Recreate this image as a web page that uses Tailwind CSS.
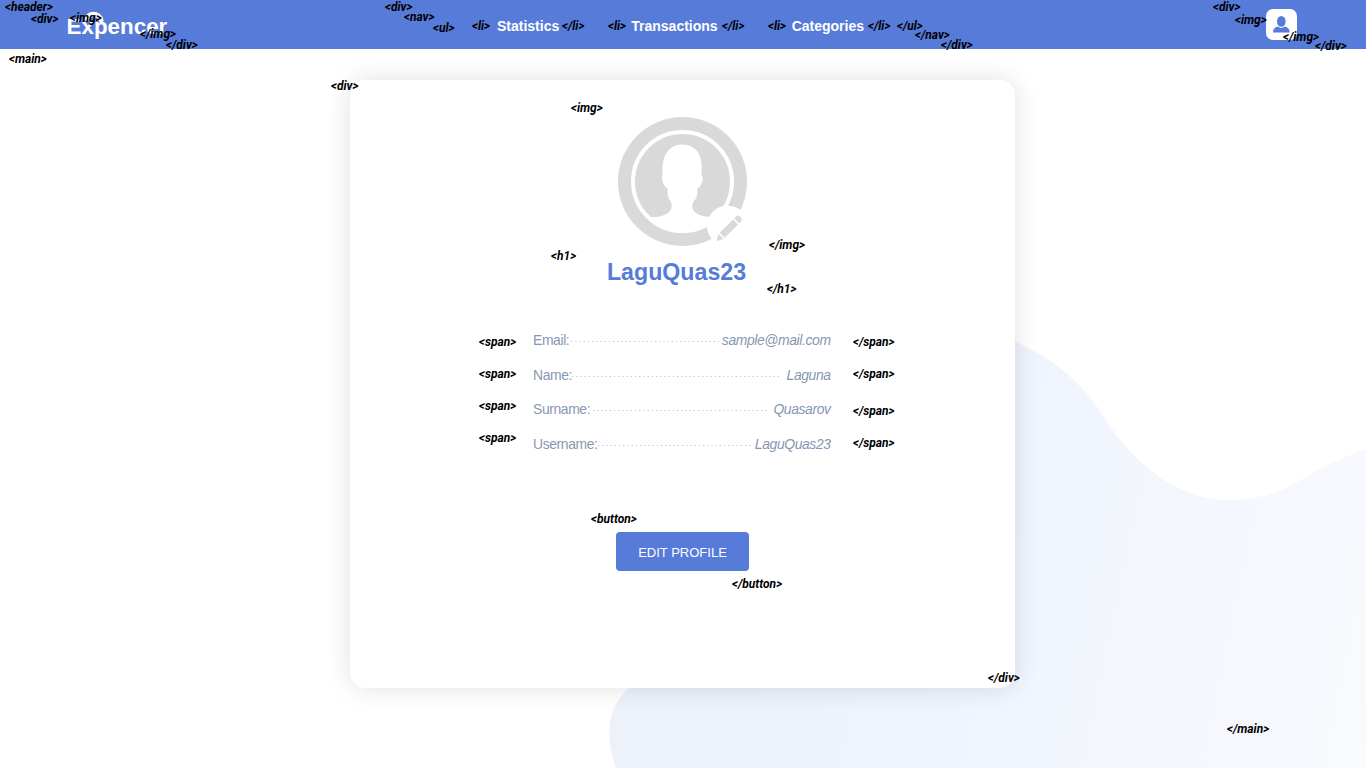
<!DOCTYPE html>
<html lang="en">
<head>
<meta charset="utf-8">
<title>Expencer</title>
<script src="https://cdn.jsdelivr.net/npm/@tailwindcss/browser@4"></script>
</head>
<body class="relative w-[1366px] h-[768px] overflow-hidden bg-white flex flex-col font-['Liberation_Sans',sans-serif]">
<svg class="absolute inset-0" width="1366" height="768" viewBox="0 0 1366 768">
  <defs><linearGradient id="wave" gradientUnits="userSpaceOnUse" x1="720" y1="540" x2="1380" y2="680"><stop offset="0" stop-color="#ecf1fa"/><stop offset=".5" stop-color="#f1f5fd"/><stop offset="1" stop-color="#f9fafe"/></linearGradient></defs>
  <path fill="url(#wave)" d="M616 768C605 738 606 708 629 688L700 600L900 320C950 320 985 327 1015 341.500C1051 357 1081 382 1100 411C1129 459 1173 500 1231 500C1254 500 1277 494 1299 481C1320 468 1342 457 1366 449V768Z"/>
</svg>
<header class="relative h-[49px] shrink-0 bg-[#567bd9] flex items-center">
  <div class="relative ml-[66.500px] w-[419px] text-white font-bold text-[22.400px] leading-[26px] pt-[4px]">
    <svg class="absolute left-[16.500px] top-0" width="22" height="14" viewBox="0 0 22 14"><path fill="#fff" d="M.5 10A10.200 10.200 0 0 1 20.500 10L20 13H17Q15 7 11 7Q7 7 5 11Z"/></svg>
    <span class="relative">Expencer</span>
  </div>
  <nav class="flex-1 ml-[11.500px]"><ul class="flex items-center gap-[72px] text-white font-bold text-[14px] leading-4 pt-[2px]">
    <li>Statistics</li><li>Transactions</li><li class="ml-[2px]">Categories</li></ul></nav>
  <div class="w-[31px] h-[31px] rounded-[7px] bg-white mr-[69px]">
    <svg width="31" height="31" viewBox="0 0 31 31" fill="#567bd9"><ellipse cx="15.300" cy="12.400" rx="4.300" ry="5.400"/><path d="M7 23.500Q7 18.500 12 17.500Q15.300 20.300 18.600 17.500Q23.700 18.500 23.700 23.500Z"/></svg>
  </div>
</header>
<main class="relative flex justify-center pt-[31px] pr-px">
  <div class="w-[665px] h-[608px] rounded-[15px] bg-white shadow-[0_0_27px_rgba(0,0,0,0.12)] flex flex-col items-center pt-[37px]">
    <svg width="130" height="130" viewBox="0.500 0 130 130">
      <circle cx="65" cy="64.500" r="64.500" fill="#d9d9d9"/>
      <circle cx="65" cy="64.500" r="49.500" fill="#d9d9d9" stroke="#fff" stroke-width="4"/>
      <path fill="#fff" d="M33 100C44 101 53 96 54 91C55 87 53 84 51 81Q50 77 50 71C46 71 43 59 45 58C44 40 50 27.500 65 27.500C80 27.500 86 40 84 58C87 59 84 71 80 71Q80 77 79 81C76 84 74 87 75 91C76 97 85 100 95 100Q82 116 65 116Q46 116 33 100Z"/>
      <circle cx="110" cy="109" r="20.500" fill="#fff"/>
      <g transform="translate(99 124) rotate(-45)" fill="#d9d9d9"><path d="M0 0L6.500-3.500V3.500Z"/><rect x="8" y="-3.500" width="19" height="7"/><path d="M28.500-3.500h2a3.500 3.500 0 0 1 0 7h-2z"/></g>
    </svg>
    <h1 class="mt-[11px] mr-[12px] text-[#567bd9] font-bold text-[23.200px] leading-7">LaguQuas23</h1>
    <div class="mt-[46px] mr-px w-[298px] text-[13.900px] tracking-[-0.38px] leading-[16px] text-[#8797b2] flex flex-col gap-[18.600px]">
      <div class="flex"><span>Email:</span><svg class="flex-1 h-4 ml-[2px]"><line x1="0" x2="100%" y1="9.500" y2="9.500" stroke="#c0c6d8" stroke-dasharray="1.200 3"/></svg><em class="mr-[.4px]">sample@mail.com</em></div>
      <div class="flex"><span>Name:</span><svg class="flex-1 h-4 mr-[5px]"><line x1="0" x2="100%" y1="9.500" y2="9.500" stroke="#c0c6d8" stroke-dasharray="1.200 3"/></svg><em class="mr-[.4px]">Laguna</em></div>
      <div class="flex"><span>Surname:</span><svg class="flex-1 h-4 ml-[3px] mr-[6px]"><line x1="0" x2="100%" y1="9.500" y2="9.500" stroke="#c0c6d8" stroke-dasharray="1.200 3"/></svg><em class="mr-[.4px]">Quasarov</em></div>
      <div class="flex"><span>Username:</span><svg class="flex-1 h-4 mr-[4px]"><line x1="0" x2="100%" y1="9.500" y2="9.500" stroke="#c0c6d8" stroke-dasharray="1.200 3"/></svg><em class="mr-[.4px]">LaguQuas23</em></div>
    </div>
    <button class="mt-[80.200px] w-[133px] h-[39px] rounded-[4px] bg-[#567bd9] text-white text-[13px] pt-[2px]">EDIT PROFILE</button>
  </div>
</main>
<div class="absolute inset-0 text-black font-['Roboto',sans-serif] font-bold italic text-[12px] leading-[14px] whitespace-nowrap">
  <span class="absolute left-[5px] top-0">&lt;header&gt;</span>
  <span class="absolute left-[31px] top-[12px]">&lt;div&gt;</span>
  <span class="absolute left-[70px] top-[11px]">&lt;img&gt;</span>
  <span class="absolute left-[140px] top-[27px]">&lt;/img&gt;</span>
  <span class="absolute left-[166px] top-[38px]">&lt;/div&gt;</span>
  <span class="absolute left-[9px] top-[52px]">&lt;main&gt;</span>
  <span class="absolute left-[385px] top-0">&lt;div&gt;</span>
  <span class="absolute left-[404px] top-[10px]">&lt;nav&gt;</span>
  <span class="absolute left-[433px] top-[21px]">&lt;ul&gt;</span>
  <span class="absolute left-[472px] top-[19px]">&lt;li&gt;</span>
  <span class="absolute left-[562px] top-[19px]">&lt;/li&gt;</span>
  <span class="absolute left-[608px] top-[19px]">&lt;li&gt;</span>
  <span class="absolute left-[722px] top-[19px]">&lt;/li&gt;</span>
  <span class="absolute left-[768px] top-[19px]">&lt;li&gt;</span>
  <span class="absolute left-[868px] top-[19px]">&lt;/li&gt;</span>
  <span class="absolute left-[897px] top-[19px]">&lt;/ul&gt;</span>
  <span class="absolute left-[915px] top-[28px]">&lt;/nav&gt;</span>
  <span class="absolute left-[941px] top-[38px]">&lt;/div&gt;</span>
  <span class="absolute left-[1213px] top-0">&lt;div&gt;</span>
  <span class="absolute left-[1235px] top-[13px]">&lt;img&gt;</span>
  <span class="absolute left-[1283px] top-[30px]">&lt;/img&gt;</span>
  <span class="absolute left-[1315px] top-[39px]">&lt;/div&gt;</span>
  <span class="absolute left-[331px] top-[79px]">&lt;div&gt;</span>
  <span class="absolute left-[571px] top-[101px]">&lt;img&gt;</span>
  <span class="absolute left-[769px] top-[238px]">&lt;/img&gt;</span>
  <span class="absolute left-[551px] top-[249px]">&lt;h1&gt;</span>
  <span class="absolute left-[767px] top-[282px]">&lt;/h1&gt;</span>
  <span class="absolute left-[479px] top-[335px]">&lt;span&gt;</span>
  <span class="absolute left-[479px] top-[367px]">&lt;span&gt;</span>
  <span class="absolute left-[479px] top-[399px]">&lt;span&gt;</span>
  <span class="absolute left-[479px] top-[431px]">&lt;span&gt;</span>
  <span class="absolute left-[853px] top-[335px]">&lt;/span&gt;</span>
  <span class="absolute left-[853px] top-[367px]">&lt;/span&gt;</span>
  <span class="absolute left-[853px] top-[404px]">&lt;/span&gt;</span>
  <span class="absolute left-[853px] top-[436px]">&lt;/span&gt;</span>
  <span class="absolute left-[591px] top-[512px]">&lt;button&gt;</span>
  <span class="absolute left-[732px] top-[577px]">&lt;/button&gt;</span>
  <span class="absolute left-[988px] top-[671px]">&lt;/div&gt;</span>
  <span class="absolute left-[1227px] top-[722px]">&lt;/main&gt;</span>
</div>
</body>
</html>
